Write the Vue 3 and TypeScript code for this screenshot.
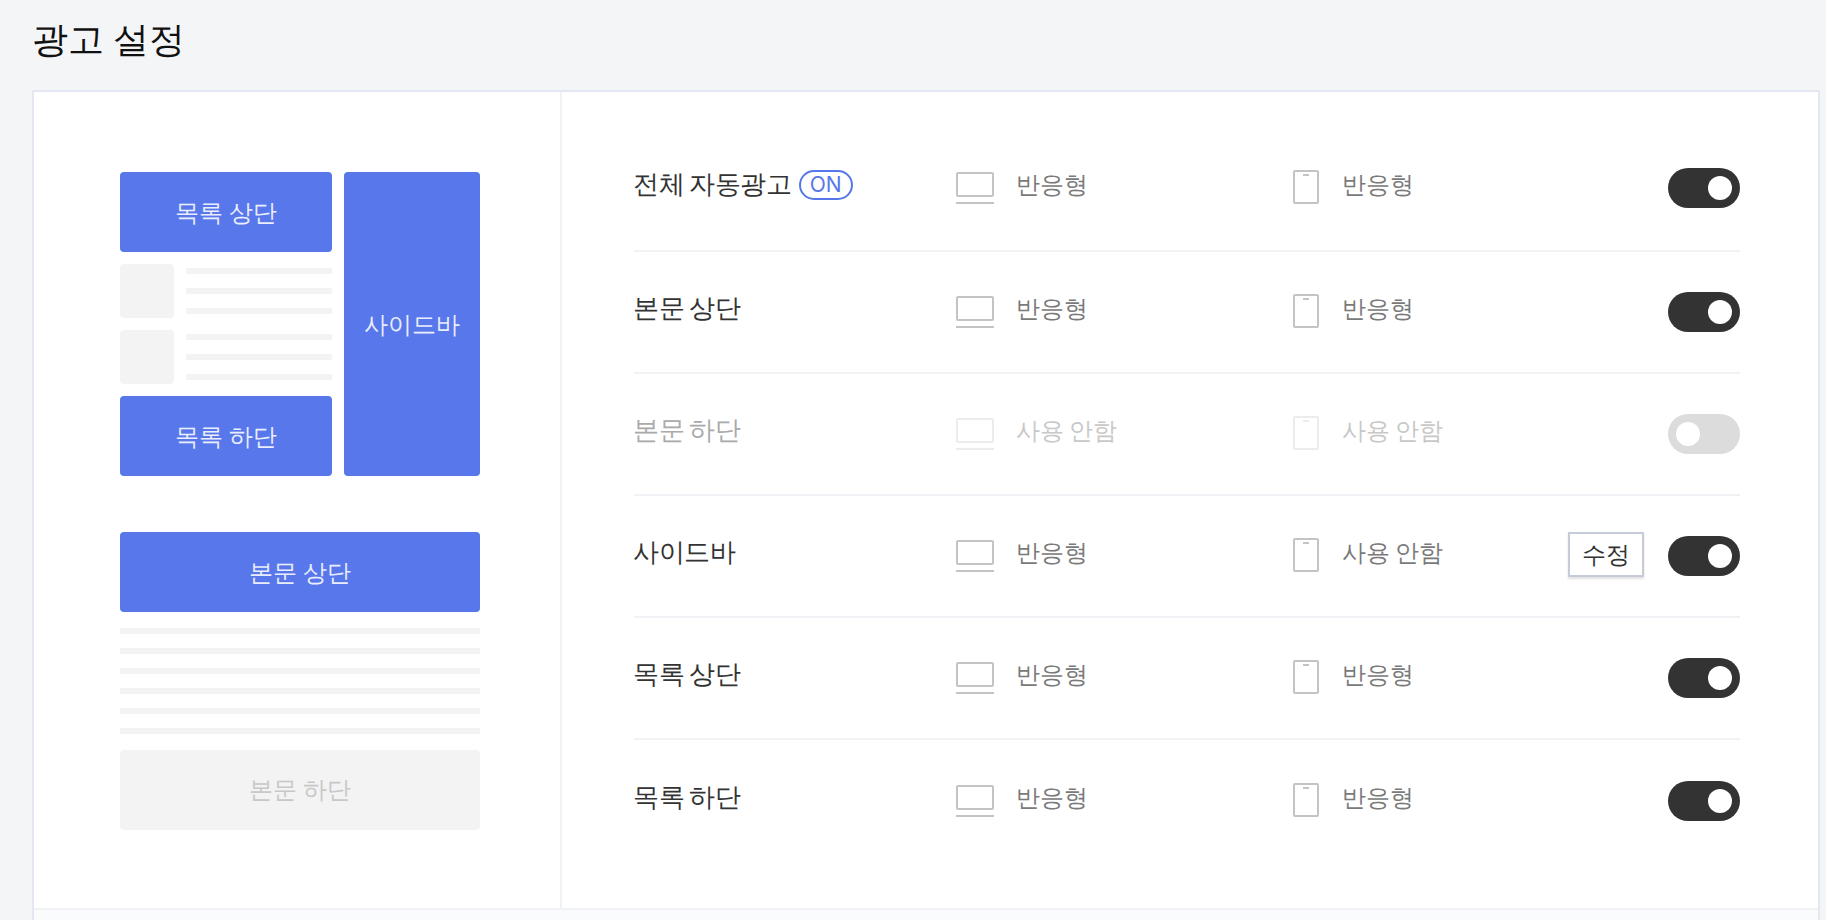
<script setup lang="ts">
interface AdRow {
  label: string;
  pc: string;
  mobile: string;
  enabled: boolean;
  badge?: boolean;
  editable?: boolean;
}

const rows: AdRow[] = [
  { label: '전체 자동광고', pc: '반응형', mobile: '반응형', enabled: true, badge: true },
  { label: '본문 상단', pc: '반응형', mobile: '반응형', enabled: true },
  { label: '본문 하단', pc: '사용 안함', mobile: '사용 안함', enabled: false },
  { label: '사이드바', pc: '반응형', mobile: '사용 안함', enabled: true, editable: true },
  { label: '목록 상단', pc: '반응형', mobile: '반응형', enabled: true },
  { label: '목록 하단', pc: '반응형', mobile: '반응형', enabled: true },
];
</script>

<template>
  <div class="page">
    <h1 class="title">광고 설정</h1>
    <div class="panel">
      <div class="panel-body">
        <aside class="preview">
          <div class="list-preview">
            <div class="list-col">
              <div class="tile">목록 상단</div>
              <div v-for="n in 2" :key="n" class="post">
                <div class="thumb"></div>
                <div class="post-lines">
                  <i></i><i></i><i></i>
                </div>
              </div>
              <div class="tile">목록 하단</div>
            </div>
            <div class="tile side">사이드바</div>
          </div>
          <div class="article-preview">
            <div class="tile">본문 상단</div>
            <div class="article-lines">
              <i v-for="n in 6" :key="n"></i>
            </div>
            <div class="tile off">본문 하단</div>
          </div>
        </aside>

        <section class="rows">
          <div v-for="row in rows" :key="row.label" class="row" :class="{ disabled: !row.enabled }">
            <div class="label">
              {{ row.label }}
              <span v-if="row.badge" class="badge">ON</span>
            </div>
            <div class="device">
              <span class="laptop"></span>
              <span class="value">{{ row.pc }}</span>
            </div>
            <div class="device">
              <span class="phone"></span>
              <span class="value">{{ row.mobile }}</span>
            </div>
            <div class="actions">
              <button v-if="row.editable" class="edit-btn">수정</button>
              <span class="toggle" :class="{ on: row.enabled }"><b></b></span>
            </div>
          </div>
        </section>
      </div>
      <div class="panel-footer"></div>
    </div>
  </div>
</template>

<style>
html, body {
  margin: 0;
  height: 920px;
  overflow: hidden;
  background: #f4f5f7;
}
</style>

<style scoped>
.page {
  padding: 0 6px 0 32px;
  font-family: Inter, sans-serif;
  word-spacing: -0.11em;
  color: #333;
}

.title {
  margin: 0;
  height: 90px;
  font-size: 36px;
  line-height: 78px;
  font-weight: 400;
  word-spacing: -0.02em;
  color: #111;
}

.panel {
  border: 2px solid #e2e7f1;
  background: #fff;
}

.panel-body {
  display: flex;
  height: 816px;
}

.preview {
  width: 528px;
  box-sizing: border-box;
  padding: 80px 0 0 86px;
  border-right: 2px solid #f1f2f6;
  flex-shrink: 0;
}

.list-preview {
  display: flex;
  gap: 12px;
  width: 360px;
}

.list-col {
  width: 212px;
  display: flex;
  flex-direction: column;
  gap: 12px;
}

.tile {
  box-sizing: border-box;
  height: 80px;
  padding-top: 2px;
  display: flex;
  align-items: center;
  justify-content: center;
  background: #5777eb;
  border-radius: 4px;
  color: #e9edfc;
  font-size: 24px;
  word-spacing: -0.07em;
}

.tile.side {
  width: 136px;
  height: 304px;
}

.tile.off {
  padding-top: 0;
  background: #f3f3f3;
  color: #c8c8c8;
}

.post {
  display: flex;
  gap: 12px;
}

.thumb {
  width: 54px;
  height: 54px;
  background: #f3f3f3;
  border-radius: 4px;
}

.post-lines {
  flex: 1;
  display: flex;
  flex-direction: column;
  gap: 14px;
  padding-top: 4px;
}

.post-lines i,
.article-lines i {
  display: block;
  height: 6px;
  background: #f3f3f3;
}

.article-preview {
  margin-top: 56px;
  width: 360px;
}

.article-lines {
  display: flex;
  flex-direction: column;
  gap: 14px;
  margin: 16px 0;
}

.rows {
  flex: 1;
  padding: 36px 78px 0 72px;
}

.row {
  display: grid;
  grid-template-columns: 322px 337px 1fr auto;
  align-items: center;
  height: 122px;
  box-sizing: border-box;
  border-bottom: 2px solid #f1f2f6;
}

.row:first-child {
  height: 124px;
  padding-bottom: 2px;
}

.row:last-child {
  border-bottom: 0;
}

.label {
  display: flex;
  align-items: center;
  gap: 7px;
  margin: -7px 0 0 -1px;
  font-size: 26px;
  letter-spacing: -0.4px;
  word-spacing: -0.07em;
  color: #333;
}

.badge {
  box-sizing: border-box;
  width: 54px;
  height: 30px;
  border: 2px solid #5677ea;
  border-radius: 15px;
  color: #5677ea;
  font-size: 21px;
  letter-spacing: 0;
  line-height: 26px;
  text-align: center;
}

.device {
  display: flex;
  align-items: center;
}

.laptop {
  position: relative;
  box-sizing: border-box;
  width: 38px;
  height: 25px;
  margin: -8px 22px 0 0;
  border: 2px solid #c4c4c4;
  border-radius: 2px;
}

.laptop::after {
  content: "";
  position: absolute;
  left: -2px;
  right: -2px;
  bottom: -9px;
  height: 2px;
  background: #c4c4c4;
}

.phone {
  position: relative;
  box-sizing: border-box;
  width: 26px;
  height: 34px;
  margin: -2px 23px 0 0;
  border: 2px solid #c4c4c4;
  border-radius: 2px;
}

.phone::after {
  content: "";
  position: absolute;
  left: 8px;
  top: 2px;
  width: 6px;
  height: 2px;
  background: #c4c4c4;
}

.value {
  font-size: 24px;
  color: #7a7a7a;
  margin-top: -6px;
}

.actions {
  display: flex;
  align-items: center;
  gap: 24px;
}

.edit-btn {
  box-sizing: border-box;
  width: 76px;
  height: 45px;
  margin-top: -3px;
  padding: 0;
  border: 2px solid #c5cbd9;
  background: #fff;
  box-shadow: 0 2px 2px rgba(0, 0, 0, 0.12);
  font-family: inherit;
  font-size: 24px;
  color: #333;
}

.toggle {
  display: flex;
  align-items: center;
  justify-content: flex-start;
  box-sizing: border-box;
  width: 72px;
  height: 40px;
  padding: 0 8px;
  border-radius: 20px;
  background: #dcdcdc;
}

.toggle b {
  width: 24px;
  height: 24px;
  border-radius: 50%;
  background: #fff;
}

.toggle.on {
  justify-content: flex-end;
  background: #333;
}

.disabled .label {
  color: #aaa;
}

.disabled .value {
  color: #c8c8c8;
}

.disabled .laptop,
.disabled .phone {
  border-color: #ececec;
}

.disabled .laptop::after,
.disabled .phone::after {
  background: #ececec;
}

.panel-footer {
  height: 60px;
  border-top: 2px solid #f1f2f6;
  background: #fafbfd;
}
</style>
